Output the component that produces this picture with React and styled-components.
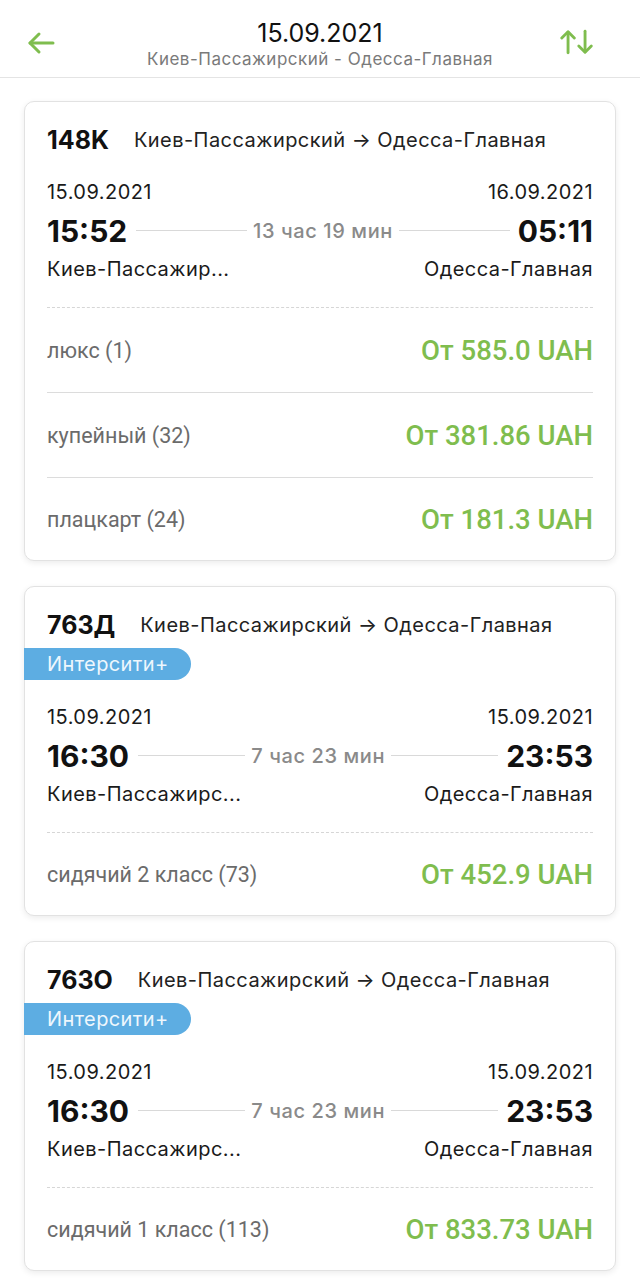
import React from "react";
import styled, { createGlobalStyle } from "styled-components";

const GREEN = "#7fbd4e";

const Global = createGlobalStyle`
  html, body { margin: 0; padding: 0; background: #fff; }
  body { font-family: Inter, "Noto Sans", sans-serif; color: #111; }
  * { box-sizing: border-box; }
`;

const Page = styled.div`
  width: 640px;
  min-height: 1280px;
  background: #fff;
`;

const Header = styled.header`
  height: 78px;
  border-bottom: 1px solid #e4e4e4;
  display: grid;
  grid-template-columns: 80px 1fr 80px;
  align-items: center;
`;

const IconButton = styled.div`
  display: flex;
  align-items: center;
  justify-content: ${(p) => (p.$right ? "flex-end" : "flex-start")};
  padding: ${(p) => (p.$right ? "7px 46px 0 0" : "8px 0 0 27px")};
`;

const TitleBlock = styled.div`
  display: flex;
  flex-direction: column;
  align-items: center;
  padding-top: 10px;
`;

const Title = styled.div`
  font-size: 25px;
  line-height: 30px;
  color: #111;
`;

const Subtitle = styled.div`
  font-size: 17px;
  letter-spacing: 0.5px;
  line-height: 22px;
  color: #7a7a7a;
  white-space: nowrap;
`;

const List = styled.main`
  padding: 23px 24px 0;
  display: flex;
  flex-direction: column;
  gap: 25px;
`;

const Card = styled.section`
  border: 1px solid #e2e2e2;
  border-radius: 10px;
  box-shadow: 0 2px 6px rgba(0, 0, 0, 0.08);
  padding: 24px 22px 0 22px;
  background: #fff;
`;

const TrainRow = styled.div`
  display: flex;
  align-items: center;
  height: 28px;
  white-space: nowrap;
`;

const TrainNo = styled.span`
  font-size: 25px;
  font-weight: 700;
  margin-right: 25px;
  flex: none;
`;

const Route = styled.span`
  font-size: 20px;
  letter-spacing: 0.45px;
  color: #222;
`;

const Badge = styled.div`
  margin: 9px 0 0 -23px;
  height: 32px;
  width: 167px;
  background: #5dade2;
  color: #eef7fd;
  border-radius: 0 16px 16px 0;
  font-size: 20px;
  letter-spacing: 0.4px;
  line-height: 32px;
  padding-left: 23px;
  white-space: nowrap;
`;

const Schedule = styled.div`
  margin-top: ${(p) => (p.$badge ? "25px" : "26px")};
  display: flex;
  flex-direction: column;
  gap: 8px;
  padding-bottom: 26px;
  border-bottom: 1px dashed #d6d6d6;
`;

const Line = styled.div`
  display: flex;
  align-items: center;
  justify-content: space-between;
  height: ${(p) => (p.$tall ? "37px" : "24px")};
  white-space: nowrap;
`;

const Plain = styled.span`
  font-size: 20px;
  letter-spacing: 0.45px;
  color: #1a1a1a;
`;

const Time = styled.span`
  font-size: 30px;
  font-weight: 700;
  color: #111;
`;

const Duration = styled.div`
  flex: 1;
  display: flex;
  align-items: center;
  gap: 6px;
  padding: 0 8px 0 9px;
  font-size: 20px;
  letter-spacing: 0.6px;
  font-weight: 500;
  color: #8a8a8a;
  &::before,
  &::after {
    content: "";
    flex: 1;
    height: 1px;
    background: #d9d9d9;
  }
`;

const FareRow = styled.div`
  height: 85px;
  display: flex;
  align-items: center;
  justify-content: space-between;
  font-family: Roboto, "Noto Sans", sans-serif;
  border-bottom: 1px solid #dcdcdc;
  &:last-child {
    border-bottom: none;
    height: 82px;
  }
`;

const FareName = styled.span`
  font-size: 21.5px;
  color: #6b6b6b;
`;

const Price = styled.span`
  font-size: 27.5px;
  font-weight: 500;
  color: ${GREEN};
`;

const BackIcon = () => (
  <svg width="28" height="24" viewBox="0 0 28 24" fill="none" stroke={GREEN} strokeWidth="3" strokeLinecap="round" strokeLinejoin="round">
    <path d="M26 12H3" />
    <path d="M12 3L3 12L12 21" />
  </svg>
);

const SwapIcon = () => (
  <svg width="38" height="28" viewBox="0 0 38 28" fill="none" stroke={GREEN} strokeWidth="3.2" strokeLinecap="round" strokeLinejoin="round">
    <path d="M9 26V3" />
    <path d="M2 9.5L9 2.5L16 9.5" />
    <path d="M28 2V25" />
    <path d="M21 18.5L28 25.5L35 18.5" />
  </svg>
);

const trains = [
  {
    no: "148K",
    badge: false,
    depDate: "15.09.2021",
    arrDate: "16.09.2021",
    dep: "15:52",
    arr: "05:11",
    duration: "13 час 19 мин",
    from: "Киев-Пассажир...",
    to: "Одесса-Главная",
    fares: [
      ["люкс (1)", "От 585.0 UAH"],
      ["купейный (32)", "От 381.86 UAH"],
      ["плацкарт (24)", "От 181.3 UAH"],
    ],
  },
  {
    no: "763Д",
    badge: true,
    depDate: "15.09.2021",
    arrDate: "15.09.2021",
    dep: "16:30",
    arr: "23:53",
    duration: "7 час 23 мин",
    from: "Киев-Пассажирс...",
    to: "Одесса-Главная",
    fares: [["сидячий 2 класс (73)", "От 452.9 UAH"]],
  },
  {
    no: "763О",
    badge: true,
    depDate: "15.09.2021",
    arrDate: "15.09.2021",
    dep: "16:30",
    arr: "23:53",
    duration: "7 час 23 мин",
    from: "Киев-Пассажирс...",
    to: "Одесса-Главная",
    fares: [["сидячий 1 класс (113)", "От 833.73 UAH"]],
  },
];

export default function App() {
  return (
    <Page>
      <Global />
      <Header>
        <IconButton>
          <BackIcon />
        </IconButton>
        <TitleBlock>
          <Title>15.09.2021</Title>
          <Subtitle>Киев-Пассажирский - Одесса-Главная</Subtitle>
        </TitleBlock>
        <IconButton $right>
          <SwapIcon />
        </IconButton>
      </Header>
      <List>
        {trains.map((t) => (
          <Card key={t.no}>
            <TrainRow>
              <TrainNo>{t.no}</TrainNo>
              <Route>Киев-Пассажирский → Одесса-Главная</Route>
            </TrainRow>
            {t.badge && <Badge>Интерсити+</Badge>}
            <Schedule $badge={t.badge}>
              <Line>
                <Plain>{t.depDate}</Plain>
                <Plain>{t.arrDate}</Plain>
              </Line>
              <Line $tall>
                <Time>{t.dep}</Time>
                <Duration>{t.duration}</Duration>
                <Time>{t.arr}</Time>
              </Line>
              <Line>
                <Plain>{t.from}</Plain>
                <Plain>{t.to}</Plain>
              </Line>
            </Schedule>
            {t.fares.map(([name, price]) => (
              <FareRow key={name}>
                <FareName>{name}</FareName>
                <Price>{price}</Price>
              </FareRow>
            ))}
          </Card>
        ))}
      </List>
    </Page>
  );
}
